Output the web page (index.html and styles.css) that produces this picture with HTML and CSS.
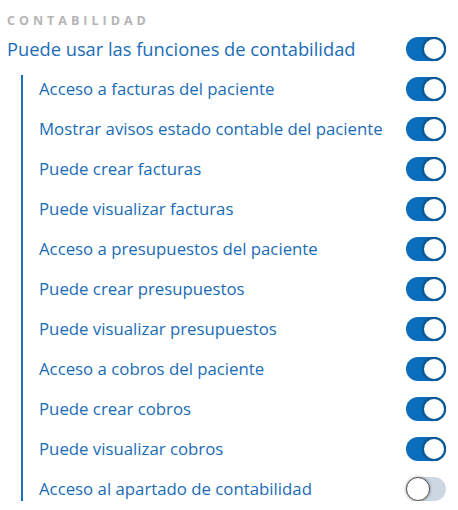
FILE: index.html
```html
<!DOCTYPE html>
<html lang="es">
<head>
<meta charset="utf-8">
<link rel="stylesheet" href="styles.css">
</head>
<body>
<div class="panel">
  <div class="title">CONTABILIDAD</div>
  <div class="row main">
    <span class="label">Puede usar las funciones de contabilidad</span>
    <span class="toggle on"><span class="knob"></span></span>
  </div>
  <div class="sub">
    <div class="row"><span class="label">Acceso a facturas del paciente</span><span class="toggle on"><span class="knob"></span></span></div>
    <div class="row"><span class="label">Mostrar avisos estado contable del paciente</span><span class="toggle on"><span class="knob"></span></span></div>
    <div class="row"><span class="label">Puede crear facturas</span><span class="toggle on"><span class="knob"></span></span></div>
    <div class="row"><span class="label">Puede visualizar facturas</span><span class="toggle on"><span class="knob"></span></span></div>
    <div class="row"><span class="label">Acceso a presupuestos del paciente</span><span class="toggle on"><span class="knob"></span></span></div>
    <div class="row"><span class="label">Puede crear presupuestos</span><span class="toggle on"><span class="knob"></span></span></div>
    <div class="row"><span class="label">Puede visualizar presupuestos</span><span class="toggle on"><span class="knob"></span></span></div>
    <div class="row"><span class="label">Acceso a cobros del paciente</span><span class="toggle on"><span class="knob"></span></span></div>
    <div class="row"><span class="label">Puede crear cobros</span><span class="toggle on"><span class="knob"></span></span></div>
    <div class="row"><span class="label">Puede visualizar cobros</span><span class="toggle on"><span class="knob"></span></span></div>
    <div class="row"><span class="label">Acceso al apartado de contabilidad</span><span class="toggle off"><span class="knob"></span></span></div>
  </div>
</div>
</body>
</html>
```

FILE: styles.css
```css
html, body {
  margin: 0;
  padding: 0;
  background: #ffffff;
}
body {
  font-family: "Open Sans", "Noto Sans", sans-serif;
  color: #1a6cb8;
}
.panel {
  width: 446px;
  padding: 13px 0 0 7px;
  box-sizing: content-box;
}
.title {
  font-size: 12.5px;
  font-weight: 700;
  letter-spacing: 4px;
  color: #b5b5b5;
  line-height: 16px;
  height: 16px;
}
.row {
  display: flex;
  align-items: center;
  justify-content: space-between;
  height: 40px;
}
.label {
  font-size: 16.8px;
  line-height: 20px;
  white-space: nowrap;
}
.row.main .label {
  font-size: 18.3px;
  line-height: 22px;
}
.sub {
  margin-left: 14px;
  margin-top: 6px;
  border-left: 2px solid #1a72bd;
  padding-left: 16px;
  display: flex;
  flex-direction: column;
}
.sub .row:first-child {
  margin-top: -6px;
}
.sub .row:last-child {
  margin-bottom: -8px;
}
.toggle {
  position: relative;
  width: 40px;
  height: 24px;
  border-radius: 12px;
  flex: none;
  margin-right: 7px;
}
.toggle.on {
  background: #0a6ebd;
}
.toggle.off {
  background: #cdd7e2;
}
.knob {
  position: absolute;
  top: 0;
  width: 24px;
  height: 24px;
  box-sizing: border-box;
  border-radius: 50%;
  background: #fff;
}
.toggle.on .knob {
  right: 0;
  border: 2px solid #0a5a9c;
  box-shadow: 0 0 1px rgba(0,0,0,0.4);
}
.toggle.off .knob {
  left: 0;
  border: 1.5px solid #555;
  box-shadow: 0 0 3px rgba(0,0,0,0.45);
}
```
